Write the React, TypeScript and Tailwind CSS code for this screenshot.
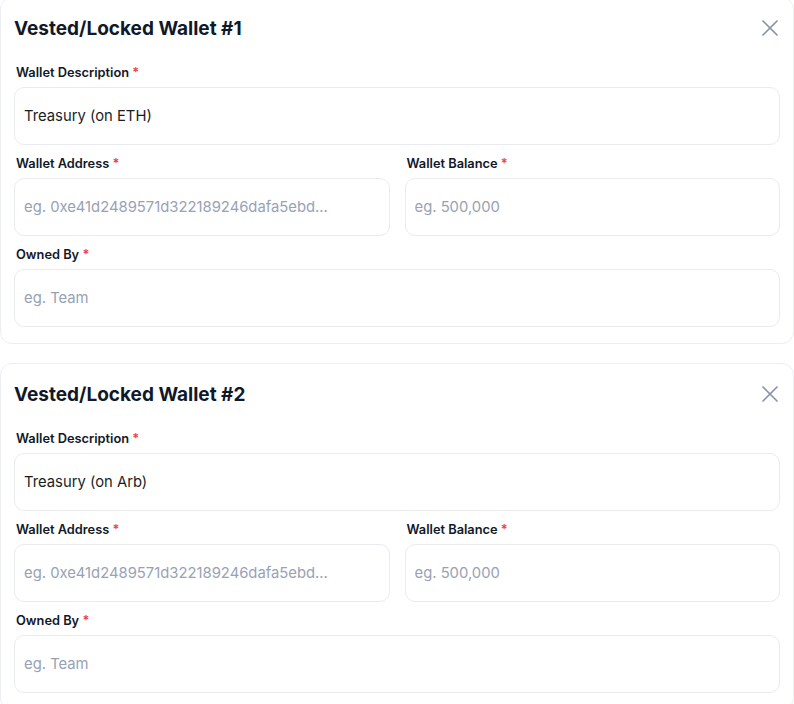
import React from "react";

function Label({ text }: { text: string }) {
  return (
    <label className="block h-4 text-[12.8px] leading-4 font-semibold text-[#111827] pl-[2px]">
      {text} <span className="text-[#ef4444]">*</span>
    </label>
  );
}

function Field({ label, value, placeholder }: { label: string; value?: string; placeholder?: string }) {
  return (
    <div className="flex flex-col gap-[6px]">
      <Label text={label} />
      <div className="h-[58px] rounded-[10px] border border-[#e9ebf0] bg-white flex items-center px-[9px] text-[14.8px]">
        {value ? (
          <span className="text-[#1a1d24]">{value}</span>
        ) : (
          <span className="text-[#98a2b5]">{placeholder}</span>
        )}
      </div>
    </div>
  );
}

function CloseIcon() {
  return (
    <svg width="18" height="18" viewBox="0 0 18 18" fill="none" stroke="#8a94a8" strokeWidth="1.7" strokeLinecap="round">
      <line x1="2" y1="2" x2="16" y2="16" />
      <line x1="16" y1="2" x2="2" y2="16" />
    </svg>
  );
}

function WalletCard({ n, desc }: { n: number; desc: string }) {
  return (
    <div className="rounded-[12px] border border-[#eceef2] bg-white px-[13px] pt-[19px] pb-[16px]">
      <div className="flex items-center justify-between h-6">
        <h2 className="text-[19px] leading-6 font-bold text-[#111827]">Vested/Locked Wallet #{n}</h2>
        <div className="mr-[1px] -mt-[3px]">
          <CloseIcon />
        </div>
      </div>
      <div className="mt-6 flex flex-col gap-[11px]">
        <Field label="Wallet Description" value={desc} />
        <div className="grid grid-cols-2 gap-[15px]">
          <Field label="Wallet Address" placeholder="eg. 0xe41d2489571d322189246dafa5ebd..." />
          <Field label="Wallet Balance" placeholder="eg. 500,000" />
        </div>
        <Field label="Owned By" placeholder="eg. Team" />
      </div>
    </div>
  );
}

export default function App() {
  return (
    <div className="w-[794px] h-[704px] overflow-hidden bg-white" style={{ fontFamily: "Inter, 'Liberation Sans', sans-serif" }}>
      <div className="-mt-[3px] flex flex-col gap-[19px]">
        <WalletCard n={1} desc="Treasury (on ETH)" />
        <WalletCard n={2} desc="Treasury (on Arb)" />
      </div>
    </div>
  );
}
